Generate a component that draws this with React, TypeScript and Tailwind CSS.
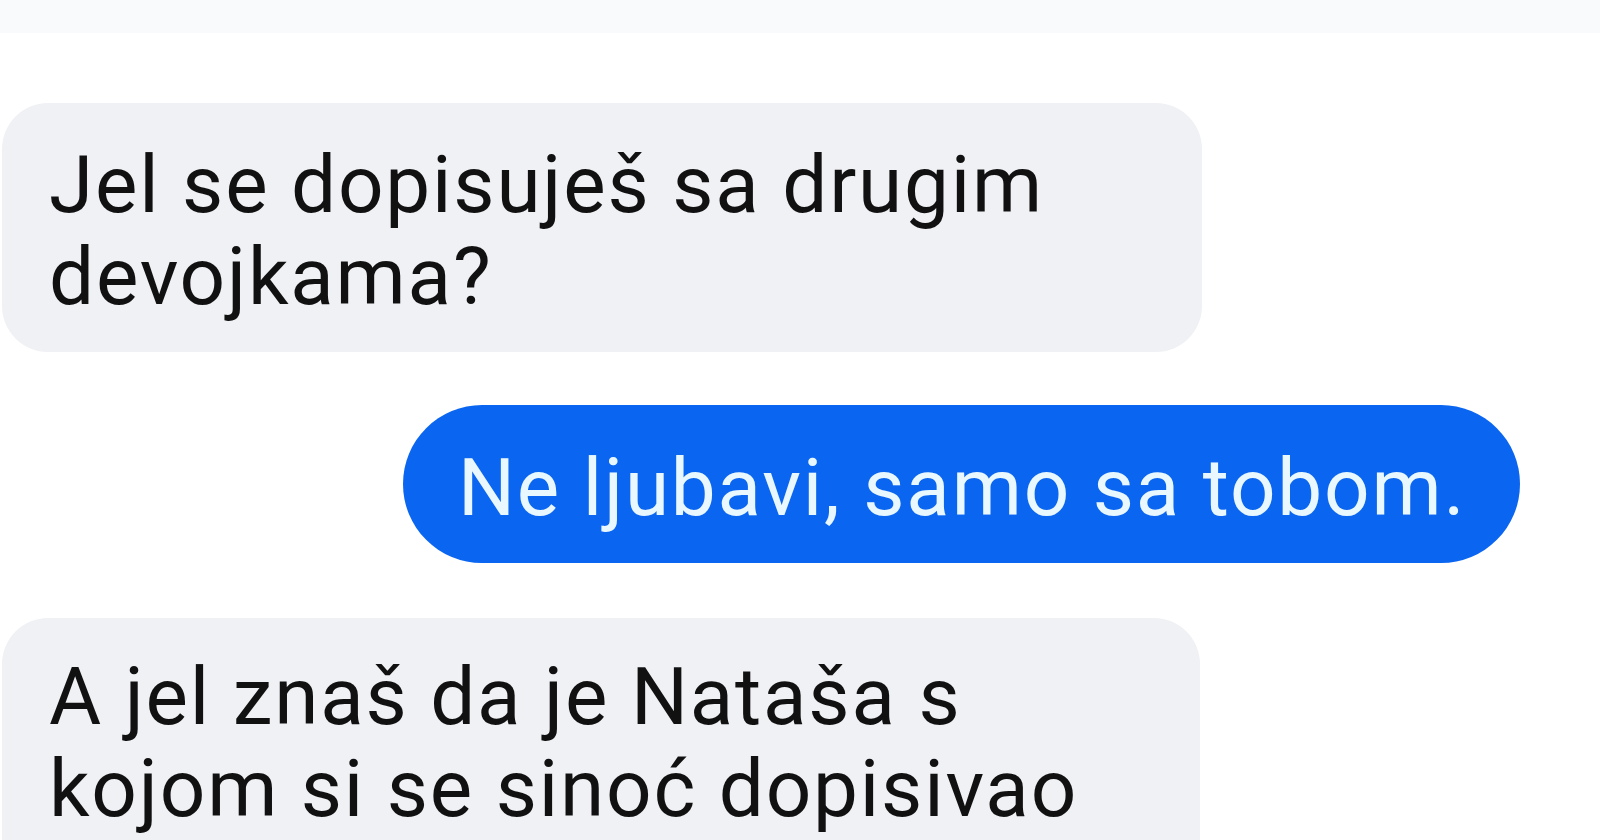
import React from 'react';

const font = { fontFamily: 'Roboto, "Noto Sans", sans-serif' };

const App: React.FC = () => {
  return (
    <div className="w-[1600px] h-[840px] overflow-hidden bg-white" style={font}>
      <div className="h-[33px] bg-[#f9fafc]" />
      <div className="flex flex-col">
        <div className="mt-[70px] ml-[2px] w-[1200px] rounded-[46px] bg-[#f0f1f5] pl-[47px] pt-[36px] pb-[29px] text-[80px] leading-[92px] tracking-[1.8px] text-[#111111]">
          Jel se dopisuješ sa drugim
          <br />
          devojkama?
        </div>
        <div className="mt-[53px] ml-[403px] w-[1117px] h-[158px] rounded-full bg-[#0a65f0] pl-[55px] pt-[37px] text-[80px] leading-[92px] tracking-[1.8px] text-[#e9f8ff]">
          Ne ljubavi, samo sa tobom.
        </div>
        <div className="mt-[55px] ml-[2px] w-[1198px] h-[300px] rounded-[46px] bg-[#f0f1f5] pl-[47px] pt-[33px] text-[80px] leading-[92px] tracking-[1.8px] text-[#111111]">
          A jel znaš da je Nataša s
          <br />
          kojom si se sinoć dopisivao
        </div>
      </div>
    </div>
  );
};

export default App;
